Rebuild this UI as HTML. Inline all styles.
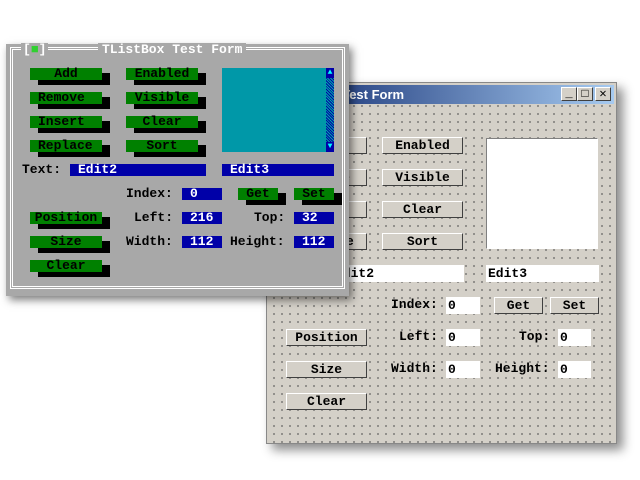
<!DOCTYPE html>
<html><head><style>
*{margin:0;padding:0;box-sizing:border-box}
body{width:640px;height:480px;background:#fff;position:relative;overflow:hidden;font-family:"Liberation Mono",monospace;font-weight:bold;font-size:13px}
.a{position:absolute;white-space:pre;line-height:14px}
#back{position:absolute;left:266px;top:82px;width:351px;height:362px;background-color:#d4d0c8;
background-image:radial-gradient(circle,#555 0.7px,transparent 0.9px);background-size:8px 8px;background-position:3px 3px;
border:1px solid #888;box-shadow:6px 6px 10px rgba(0,0,0,.45)}
.title{position:absolute;left:2px;top:2px;right:2px;height:19px;background:linear-gradient(90deg,#0a246a,#a6caf0);color:#fff;font-family:"Liberation Sans",sans-serif;font-weight:bold;font-size:13px;line-height:19px;padding-left:14px}
.tb{position:absolute;top:4px;width:16px;height:14px;background:#d4d0c8;border:1px solid;border-color:#fff #404040 #404040 #fff;color:#000;font-size:12px;line-height:12px;text-align:center}
.wb{position:absolute;height:17px;background:#d4d0c8;border:1px solid;border-color:#fff #404040 #404040 #fff;text-align:center;line-height:15px;color:#000}
.we{position:absolute;height:17px;background:#fff;line-height:17px;padding-left:2px;color:#000}
#front{position:absolute;left:6px;top:44px;width:343px;height:252px;background:#a8a8a8;box-shadow:3px 4px 8px rgba(0,0,0,.5)}
.gb{position:absolute;height:12px;background:#008000;color:#000;line-height:12px;text-align:center;box-shadow:8px 5px 0 #000}
.gl{text-align:left;padding-left:8px}
.be{position:absolute;height:12px;background:#0000a8;color:#fff;line-height:12px;padding-left:8px}
.lbl{position:absolute;color:#000;line-height:12px}
</style></head><body>

<div id="back">
 <div class="title">TListBox Test Form</div>
 <div class="tb" style="left:294px">_</div>
 <div class="tb" style="left:310px">□</div>
 <div class="tb" style="left:328px">✕</div>
 <div class="wb" style="left:19px;top:54px;width:81px">Add</div>
 <div class="wb" style="left:19px;top:86px;width:81px">Remove</div>
 <div class="wb" style="left:19px;top:118px;width:81px">Insert</div>
 <div class="wb" style="left:19px;top:150px;width:81px">Replace</div>
 <div class="wb" style="left:115px;top:54px;width:81px">Enabled</div>
 <div class="wb" style="left:115px;top:86px;width:81px">Visible</div>
 <div class="wb" style="left:115px;top:118px;width:81px">Clear</div>
 <div class="wb" style="left:115px;top:150px;width:81px">Sort</div>
 <div style="position:absolute;left:219px;top:55px;width:112px;height:111px;background:#fff;border:1px solid;border-color:#808080 #fff #fff #808080"></div>
 <div class="we" style="left:19px;top:182px;width:178px;padding-left:49px">Edit2</div>
 <div class="we" style="left:219px;top:182px;width:113px">Edit3</div>
 <div class="lbl" style="left:124px;top:216px">Index:</div>
 <div class="we" style="left:179px;top:214px;width:34px">0</div>
 <div class="wb" style="left:227px;top:214px;width:49px">Get</div>
 <div class="wb" style="left:283px;top:214px;width:49px">Set</div>
 <div class="wb" style="left:19px;top:246px;width:81px">Position</div>
 <div class="lbl" style="left:132px;top:248px">Left:</div>
 <div class="we" style="left:179px;top:246px;width:34px">0</div>
 <div class="lbl" style="left:252px;top:248px">Top:</div>
 <div class="we" style="left:291px;top:246px;width:33px">0</div>
 <div class="wb" style="left:19px;top:278px;width:81px">Size</div>
 <div class="lbl" style="left:124px;top:280px">Width:</div>
 <div class="we" style="left:179px;top:278px;width:34px">0</div>
 <div class="lbl" style="left:228px;top:280px">Height:</div>
 <div class="we" style="left:291px;top:278px;width:33px">0</div>
 <div class="wb" style="left:19px;top:310px;width:81px">Clear</div>
</div>

<div id="front">
 <div style="position:absolute;left:4px;top:3px;width:335px;height:242px;border:1px solid #fff"></div>
 <div style="position:absolute;left:6px;top:5px;width:331px;height:238px;border:1px solid #fff"></div>
 <div class="a" style="left:15px;top:-1px;background:#a8a8a8;color:#fff;padding:0 2px">[<span style="color:#30d030">■</span>]</div>
 <div class="a" style="left:92px;top:-1px;background:#a8a8a8;color:#fff;padding:0 4px">TListBox Test Form</div>
 <div class="gb" style="left:24px;top:24px;width:72px">Add</div>
 <div class="gb gl" style="left:24px;top:48px;width:72px">Remove</div>
 <div class="gb gl" style="left:24px;top:72px;width:72px">Insert</div>
 <div class="gb gl" style="left:24px;top:96px;width:72px">Replace</div>
 <div class="gb" style="left:120px;top:24px;width:72px">Enabled</div>
 <div class="gb" style="left:120px;top:48px;width:72px">Visible</div>
 <div class="gb" style="left:120px;top:72px;width:72px">Clear</div>
 <div class="gb" style="left:120px;top:96px;width:72px">Sort</div>
 <div style="position:absolute;left:216px;top:24px;width:104px;height:84px;background:#0098a8"></div>
 <div style="position:absolute;left:320px;top:24px;width:8px;height:84px;background:repeating-linear-gradient(45deg,#0000a8 0 1px,#00a8a8 1px 2px)"></div>
 <div style="position:absolute;left:320px;top:24px;width:8px;height:10px;background:#0000a8;color:#0ff;font-size:8px;line-height:10px;text-align:center">▲</div>
 <div style="position:absolute;left:320px;top:98px;width:8px;height:10px;background:#0000a8;color:#0ff;font-size:8px;line-height:10px;text-align:center">▼</div>
 <div class="lbl" style="left:16px;top:120px">Text:</div>
 <div class="be" style="left:64px;top:120px;width:136px">Edit2</div>
 <div class="be" style="left:216px;top:120px;width:112px">Edit3</div>
 <div class="lbl" style="left:120px;top:144px">Index:</div>
 <div class="be" style="left:176px;top:144px;width:40px">0</div>
 <div class="gb" style="left:232px;top:144px;width:40px">Get</div>
 <div class="gb" style="left:288px;top:144px;width:40px">Set</div>
 <div class="gb" style="left:24px;top:168px;width:72px">Position</div>
 <div class="lbl" style="left:128px;top:168px">Left:</div>
 <div class="be" style="left:176px;top:168px;width:40px">216</div>
 <div class="lbl" style="left:248px;top:168px">Top:</div>
 <div class="be" style="left:288px;top:168px;width:40px">32</div>
 <div class="gb" style="left:24px;top:192px;width:72px">Size</div>
 <div class="lbl" style="left:120px;top:192px">Width:</div>
 <div class="be" style="left:176px;top:192px;width:40px">112</div>
 <div class="lbl" style="left:224px;top:192px">Height:</div>
 <div class="be" style="left:288px;top:192px;width:40px">112</div>
 <div class="gb" style="left:24px;top:216px;width:72px">Clear</div>
</div>
</body></html>
